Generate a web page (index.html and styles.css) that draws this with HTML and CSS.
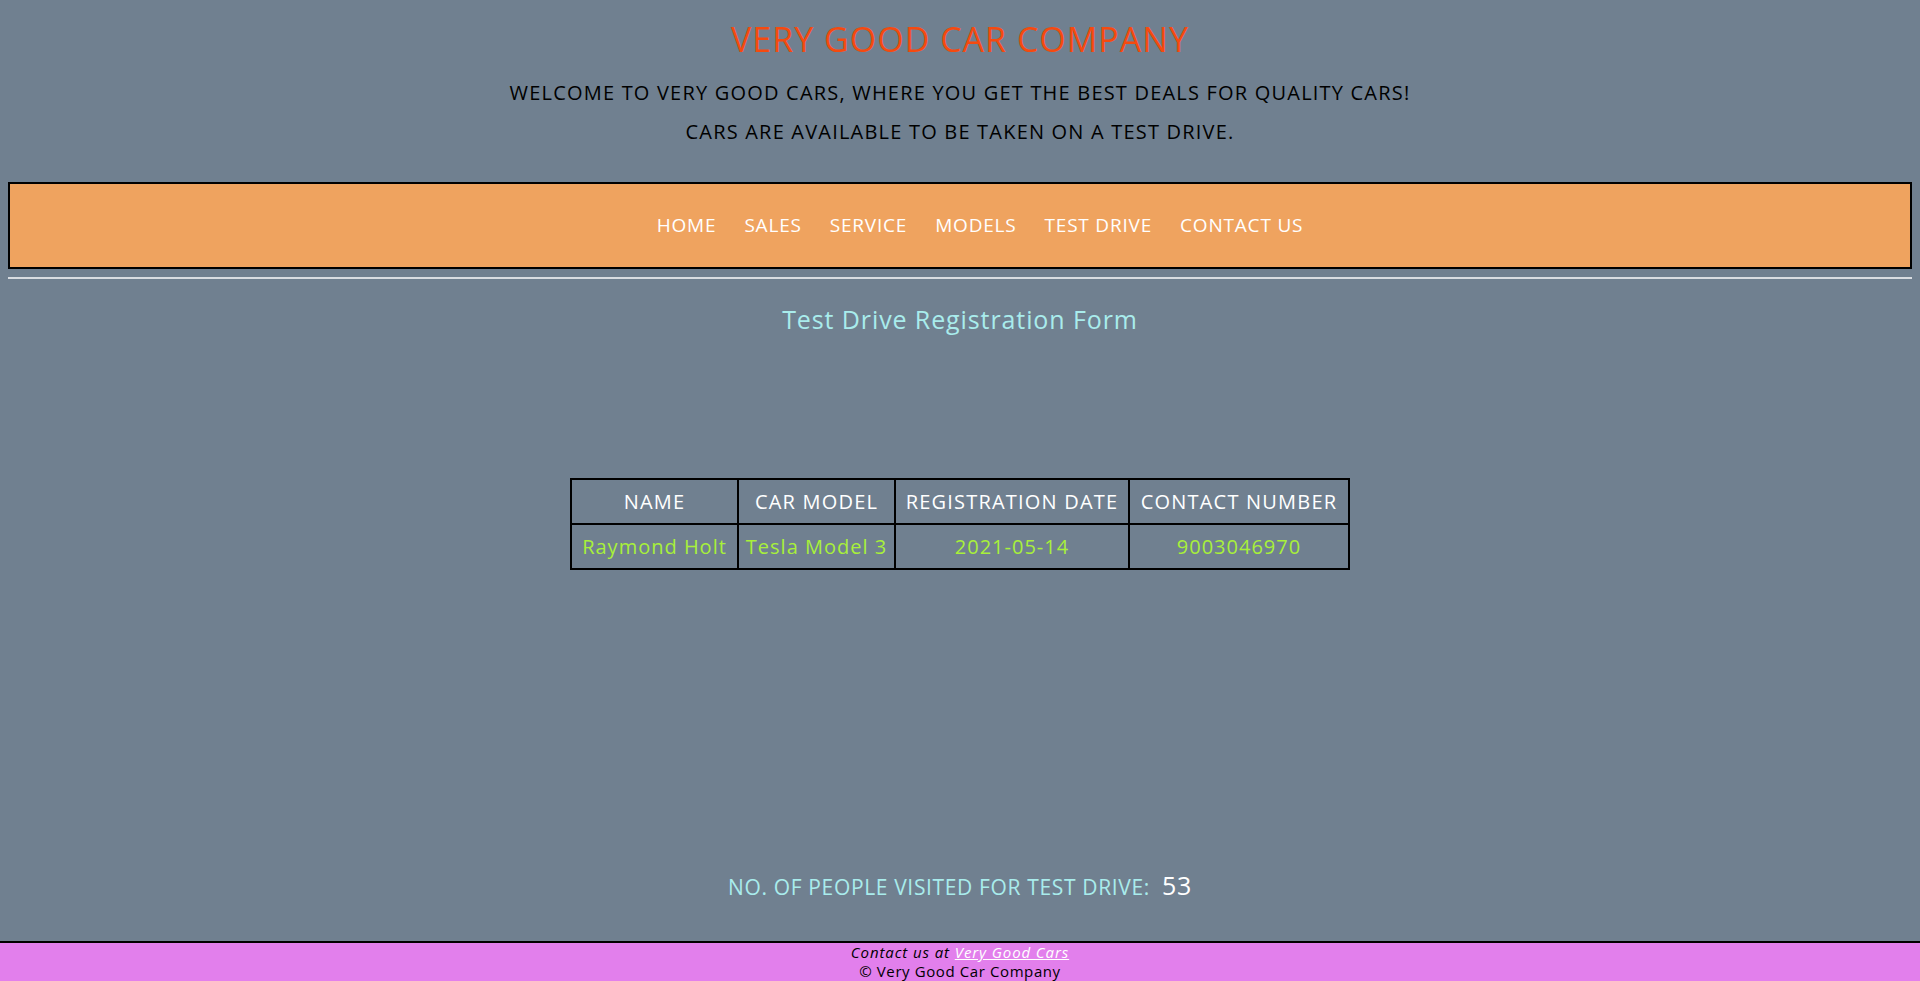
FILE: index.html
```html
<!DOCTYPE html>
<html lang="en">
<head>
<meta charset="utf-8">
<title>Very Good Car Company - Test Drive</title>
<link rel="stylesheet" href="styles.css">
</head>
<body>
<div class="page">
  <header class="masthead">
    <h1 class="title">VERY GOOD CAR COMPANY</h1>
    <p class="welcome">WELCOME TO VERY GOOD CARS, WHERE YOU GET THE BEST DEALS FOR QUALITY CARS!</p>
    <p class="welcome second">CARS ARE AVAILABLE TO BE TAKEN ON A TEST DRIVE.</p>
  </header>
  <nav class="nav">
    <ul class="nav-list">
      <li><a class="nav-link" href="#">HOME</a></li>
      <li><a class="nav-link" href="#">SALES</a></li>
      <li><a class="nav-link" href="#">SERVICE</a></li>
      <li><a class="nav-link" href="#">MODELS</a></li>
      <li><a class="nav-link" href="#">TEST DRIVE</a></li>
      <li><a class="nav-link" href="#">CONTACT US</a></li>
    </ul>
  </nav>
  <hr class="rule">
  <main class="content">
    <h2 class="form-title">Test Drive Registration Form</h2>
    <table class="reg-table">
      <colgroup>
        <col class="c-name"><col class="c-model"><col class="c-date"><col class="c-phone">
      </colgroup>
      <thead>
        <tr><th>NAME</th><th>CAR MODEL</th><th>REGISTRATION DATE</th><th>CONTACT NUMBER</th></tr>
      </thead>
      <tbody>
        <tr><td>Raymond Holt</td><td>Tesla Model 3</td><td>2021-05-14</td><td>9003046970</td></tr>
      </tbody>
    </table>
    <p class="counter">NO. OF PEOPLE VISITED FOR TEST DRIVE: <span class="count">53</span></p>
  </main>
</div>
<footer class="footer">
  <p class="footer-line contact">Contact us at <a class="footer-link" href="#">Very Good Cars</a></p>
  <p class="footer-line">&copy; Very Good Car Company</p>
</footer>
</body>
</html>
```
FILE: styles.css
```css
html, body {
  margin: 0;
  padding: 0;
}
body {
  background: #708090;
  font-family: "Open Sans", "Liberation Sans", sans-serif;
  min-height: 100vh;
  display: flex;
  flex-direction: column;
}
.page {
  flex: 1;
  padding: 0 8px;
  display: flex;
  flex-direction: column;
}
.masthead {
  text-align: center;
  padding-top: 20px;
}
.title {
  margin: 0;
  font-size: 34px;
  line-height: 39px;
  font-weight: 400;
  letter-spacing: 1px;
  color: #f54a0f;
}
.welcome {
  margin: 22px 0 0;
  font-size: 20px;
  line-height: 24px;
  font-weight: 500;
  letter-spacing: 1.2px;
  color: #000;
}
.welcome.second {
  margin-top: 15px;
}
.nav {
  margin-top: 38px;
  height: 83px;
  background: #efa35f;
  border: 2px solid #000;
  display: flex;
  align-items: center;
  justify-content: center;
}
.nav-list {
  list-style: none;
  margin: 0;
  padding: 0 0 2px 40px;
  display: flex;
  gap: 28px;
}
.nav-link {
  color: #fff;
  text-decoration: none;
  font-size: 19px;
  font-weight: 500;
  letter-spacing: 0.8px;
}
.rule {
  margin: 8px 0 0;
  border: 0;
  border-top: 2px solid #d9dde2;
  height: 0;
}
.content {
  display: flex;
  flex-direction: column;
  align-items: center;
}
.form-title {
  margin: 26px 0 0;
  font-size: 25px;
  line-height: 28px;
  font-weight: 500;
  letter-spacing: 0.9px;
  color: #a9ecec;
}
.reg-table {
  margin-top: 145px;
  border-collapse: collapse;
  border: 2px solid #000;
  font-size: 20px;
}
.c-name { width: 167px; }
.c-model { width: 157px; }
.c-date { width: 234px; }
.c-phone { width: 220px; }
.reg-table th,
.reg-table td {
  border: 2px solid #000;
  height: 43px;
  padding: 0 4px;
  text-align: center;
  font-weight: 500;
  white-space: nowrap;
}
.reg-table th {
  color: #fff;
  letter-spacing: 1.2px;
}
.reg-table td {
  color: #a8f03a;
  letter-spacing: 1px;
}
.counter {
  margin: 300px 0 0;
  font-size: 21px;
  line-height: 30px;
  letter-spacing: 0.65px;
  color: #a9ecec;
}
.count {
  margin-left: 6px;
  font-size: 25px;
  color: #fff;
}
.footer {
  background: #e27fec;
  border-top: 2px solid #000;
  text-align: center;
  height: 38px;
}
.footer-line {
  margin: 0;
  font-size: 15px;
  line-height: 19px;
  letter-spacing: 0.6px;
  color: #000;
}
.contact {
  font-style: italic;
  letter-spacing: 0.9px;
}
.footer-link {
  color: #fff;
}
```
